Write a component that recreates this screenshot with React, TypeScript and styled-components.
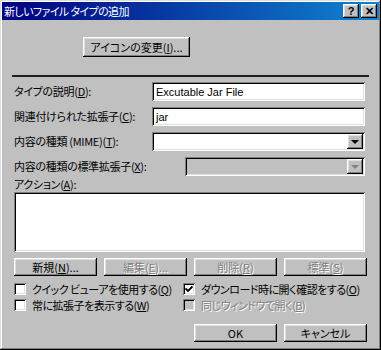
import React from "react";
import styled, { createGlobalStyle, css } from "styled-components";

const Global = createGlobalStyle`
  html, body { margin: 0; padding: 0; background: #c0c0c0; }
  body {
    font-family: "Noto Sans CJK JP", "Liberation Sans", sans-serif;
    font-size: 11px;
    font-feature-settings: "palt" 1;
    color: #000;
  }
  u { text-decoration-thickness: 1px; text-underline-offset: 1px; }
`;

const raised = css`
  box-shadow: inset -1px -1px #000, inset 1px 1px #fff, inset -2px -2px #808080,
    inset 2px 2px #dfdfdf;
`;
const sunken = css`
  box-shadow: inset 1px 1px #808080, inset -1px -1px #fff, inset 2px 2px #000,
    inset -2px -2px #dfdfdf;
`;
const disabledText = css`
  color: #808080;
  text-shadow: 1px 1px 0 #fff;
`;

const Window = styled.div`
  width: 381px;
  height: 350px;
  box-sizing: border-box;
  padding: 2px;
  background: #c0c0c0;
  box-shadow: inset -1px -1px #000, inset 1px 1px #dfdfdf, inset -2px -2px #808080,
    inset 2px 2px #fff;
  display: flex;
  flex-direction: column;
`;

const TitleBar = styled.div`
  height: 18px;
  display: flex;
  align-items: center;
  justify-content: space-between;
  padding: 0 2px 0 2px;
  background: linear-gradient(90deg, #000080 0%, #1084d0 100%);
  color: #fff;
`;

const TitleText = styled.span`
  font-size: 11px;
  line-height: 18px;
  letter-spacing: -0.6px;
  white-space: nowrap;
`;

const TitleButtons = styled.div`
  display: flex;
  gap: 2px;
`;

const TitleButton = styled.div`
  width: 16px;
  height: 14px;
  background: #c0c0c0;
  ${raised};
  display: flex;
  align-items: center;
  justify-content: center;
  color: #000;
  font-family: "Liberation Sans", sans-serif;
  font-weight: bold;
  font-size: 11px;
  line-height: 1;
`;

const Content = styled.div`
  flex: 1;
  display: flex;
  flex-direction: column;
  padding: 17px 12px 0 12px;
`;

const Button = styled.div<{ $disabled?: boolean; $width?: number }>`
  box-sizing: border-box;
  width: ${(p) => (p.$width ? `${p.$width}px` : "auto")};
  height: 18px;
  background: #c0c0c0;
  ${raised};
  display: flex;
  align-items: center;
  justify-content: center;
  font-size: 11px;
  line-height: 1;
  white-space: nowrap;
  ${(p) => p.$disabled && disabledText};
`;

const IconButton = styled(Button)`
  height: 20px;
  margin-left: 69px;
`;

const Separator = styled.div`
  margin: 18px -2px 0 -2px;
  height: 2px;
  background: #202020;
`;

const Rows = styled.div`
  margin-top: 5px;
  margin-right: 2px;
  display: flex;
  flex-direction: column;
  gap: 6px;
`;

const Row = styled.div<{ $labelWidth: number }>`
  display: grid;
  grid-template-columns: ${(p) => p.$labelWidth}px 1fr;
  align-items: center;
  height: 19px;
`;

const Label = styled.span`
  white-space: nowrap;
  font-size: 11px;
  line-height: 15px;
  letter-spacing: -0.3px;
`;

const Field = styled.div<{ $disabled?: boolean }>`
  position: relative;
  height: 19px;
  box-sizing: border-box;
  background: ${(p) => (p.$disabled ? "#c0c0c0" : "#fff")};
  ${sunken};
  padding: 0 4px;
  display: flex;
  align-items: center;
  font-family: "Liberation Sans", sans-serif;
  font-size: 11px;
`;

const DropButton = styled.div<{ $disabled?: boolean }>`
  position: absolute;
  right: 2px;
  top: 2px;
  bottom: 2px;
  width: 16px;
  background: #c0c0c0;
  ${raised};
  display: flex;
  align-items: center;
  justify-content: center;
  &::after {
    content: "";
    width: 0;
    height: 0;
    border-left: 4px solid transparent;
    border-right: 4px solid transparent;
    border-top: 4px solid ${(p) => (p.$disabled ? "#808080" : "#000")};
    margin-top: 1px;
  }
`;

const ActionsLabel = styled(Label)`
  display: block;
  height: 15px;
  margin-top: 1px;
`;

const ListBox = styled.div`
  height: 60px;
  margin-right: 2px;
  background: #fff;
  ${sunken};
`;

const ButtonRow = styled.div`
  margin-top: 6px;
  display: grid;
  grid-template-columns: repeat(4, 83px);
  column-gap: 7px;
`;

const Checks = styled.div`
  margin-top: 5px;
  display: grid;
  grid-template-columns: 169px 1fr;
  grid-auto-rows: 16px;
`;

const CheckItem = styled.div<{ $disabled?: boolean }>`
  display: flex;
  align-items: center;
  gap: 6px;
  height: 16px;
  white-space: nowrap;
  font-size: 11px;
  line-height: 16px;
  letter-spacing: -0.5px;
  ${(p) => p.$disabled && disabledText};
`;

const Box = styled.div<{ $disabled?: boolean }>`
  width: 12px;
  height: 12px;
  flex: none;
  box-sizing: border-box;
  background: ${(p) => (p.$disabled ? "#c0c0c0" : "#fff")};
  ${sunken};
  display: flex;
  align-items: center;
  justify-content: center;
`;

const Footer = styled.div`
  margin-top: 11px;
  display: flex;
  justify-content: flex-end;
  gap: 7px;
`;

const Check = ({ label, checked, disabled }: { label: React.ReactNode; checked?: boolean; disabled?: boolean }) => (
  <CheckItem $disabled={disabled}>
    <Box $disabled={disabled}>
      {checked && (
        <svg width="8" height="8" viewBox="0 0 8 8">
          <path d="M0.5 3.5 L3 6 L7.5 1.5" stroke="#000" strokeWidth="1.8" fill="none" />
        </svg>
      )}
    </Box>
    <span>{label}</span>
  </CheckItem>
);

export default function App() {
  return (
    <>
      <Global />
      <Window>
        <TitleBar>
          <TitleText>新しいファイル タイプの追加</TitleText>
          <TitleButtons>
            <TitleButton>?</TitleButton>
            <TitleButton>✕</TitleButton>
          </TitleButtons>
        </TitleBar>
        <Content>
          <IconButton $width={107}>
            アイコンの変更(<u>I</u>)...
          </IconButton>
          <Separator />
          <Rows>
            <Row $labelWidth={138}>
              <Label>
                タイプの説明(<u>D</u>):
              </Label>
              <Field>Excutable Jar File</Field>
            </Row>
            <Row $labelWidth={138}>
              <Label>
                関連付けられた拡張子(<u>C</u>):
              </Label>
              <Field>jar</Field>
            </Row>
            <Row $labelWidth={138}>
              <Label>
                内容の種類 (MIME)(<u>T</u>):
              </Label>
              <Field>
                <DropButton />
              </Field>
            </Row>
            <Row $labelWidth={171}>
              <Label>
                内容の種類の標準拡張子(<u>X</u>):
              </Label>
              <Field $disabled>
                <DropButton $disabled />
              </Field>
            </Row>
          </Rows>
          <ActionsLabel>
            アクション(<u>A</u>):
          </ActionsLabel>
          <ListBox />
          <ButtonRow>
            <Button>
              新規(<u>N</u>)...
            </Button>
            <Button $disabled>
              編集(<u>E</u>)...
            </Button>
            <Button $disabled>
              削除(<u>R</u>)
            </Button>
            <Button $disabled>
              標準(<u>S</u>)
            </Button>
          </ButtonRow>
          <Checks>
            <Check label={<>クイック ビューアを使用する(<u>Q</u>)</>} />
            <Check checked label={<>ダウンロード時に開く確認をする(<u>O</u>)</>} />
            <Check label={<>常に拡張子を表示する(<u>W</u>)</>} />
            <Check disabled label={<>同じウィンドウで開く(<u>B</u>)</>} />
          </Checks>
          <Footer>
            <Button $width={83}>OK</Button>
            <Button $width={83}>キャンセル</Button>
          </Footer>
        </Content>
      </Window>
    </>
  );
}
